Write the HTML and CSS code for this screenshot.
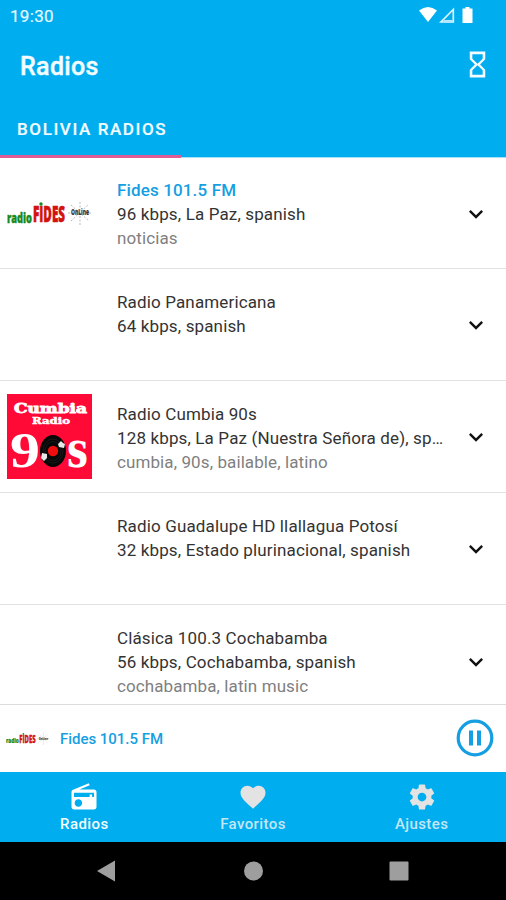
FILE: index.html
```html
<!DOCTYPE html>
<html lang="es">
<head>
<meta charset="utf-8">
<title>Radios</title>
<link rel="stylesheet" href="styles.css">
</head>
<body>
<svg class="defs" width="0" height="0">
  <symbol id="chevron" viewBox="0 0 24 24"><path d="M16.59 8.59 12 13.17 7.41 8.59 6 10l6 6 6-6z"/></symbol>
</svg>
<div class="app">
  <header class="header">
    <div class="status">
      <span class="clock">19:30</span>
      <svg class="status-icons" width="56" height="18" viewBox="0 0 56 18" fill="#fff">
        <path d="M0 4.500Q9-2.500 18 4.500L9 16z"/>
        <path d="M34.300 3.500V16H22z" fill="none" stroke="#d8f3ff" stroke-width="1.700"/><path d="M25 14h9v2.500h-9z" fill="#b5e7ff"/>
        <path d="M43.500 2.500h3V1h4v1.500h3V17h-10z"/>
      </svg>
    </div>
    <div class="titlebar">
      <h1>Radios</h1>
      <svg class="timer" viewBox="0 0 24 24"><path d="M6 2v6h.01L6 8.010 10 12l-4 4 .01.01H6V22h12v-5.990h-.01L18 16l-4-4 4-3.990-.01-.01H18V2H6zm10 14.500V20H8v-3.500l4-4 4 4zm-4-5-4-4V4h8v3.500l-4 4z"/></svg>
    </div>
    <div class="tab">BOLIVIA RADIOS</div>
  </header>
  <main class="list">
    <article class="row">
      <div class="art">
        <svg class="fides" viewBox="0 0 84 26">
          <text class="fides-radio" x="0" y="21.500" textLength="25" lengthAdjust="spacingAndGlyphs">radio</text>
          <text class="fides-name" x="26" y="21" textLength="32" lengthAdjust="spacingAndGlyphs">FIDES</text>
          <circle cx="34" cy="3" r="1.700" fill="#148a1c"/>
          <path class="fides-rays" d="M73 1v23M64 4l18 16M64 20 81 4M61 12h23"/>
          <text class="fides-online" x="64" y="14" textLength="18" lengthAdjust="spacingAndGlyphs">OnLine</text>
        </svg>
      </div>
      <div class="info"><h2 class="playing">Fides 101.5 FM</h2><p class="meta">96 kbps, La Paz, spanish</p><p class="tags">noticias</p></div>
      <svg class="chevron"><use href="#chevron"/></svg>
    </article>
    <article class="row">
      <div class="art"></div>
      <div class="info"><h2>Radio Panamericana</h2><p class="meta">64 kbps, spanish</p></div>
      <svg class="chevron"><use href="#chevron"/></svg>
    </article>
    <article class="row">
      <div class="art">
        <svg class="cumbia" viewBox="0 0 85 85">
          <path fill="#ff0a36" d="M0 0h85v85H0z"/>
          <g font-family="DejaVu Serif, serif" font-weight="700" fill="#fff" stroke="#fff">
            <text x="7" y="19" font-size="12" stroke-width=".8" textLength="73" lengthAdjust="spacingAndGlyphs">Cumbia</text>
            <text x="25" y="29.500" font-size="9" stroke-width=".5" textLength="38" lengthAdjust="spacingAndGlyphs">Radio</text>
          </g>
          <text x="60" y="73" font-family="DejaVu Serif, serif" font-weight="700" font-size="50" fill="#fff" textLength="21" lengthAdjust="spacingAndGlyphs">s</text>
          <text x="3" y="73" font-family="Liberation Serif, serif" font-weight="700" font-size="50" fill="#fff" textLength="30" lengthAdjust="spacingAndGlyphs">9</text>
          <ellipse cx="46" cy="57" rx="13" ry="16" fill="#080808"/>
          <g fill="none" stroke="#333" stroke-width=".4"><ellipse cx="46" cy="57" rx="10" ry="12"/><ellipse cx="46" cy="57" rx="8" ry="9.500"/></g>
          <circle cx="46" cy="57" r="5.200" fill="#f00d0d"/>
          <path fill="#e8e8e8" d="m54 47 2 2 2 1-1 4-5-1-1-3zM35 59l5 1v4l-3 3-3-3z"/>
        </svg>
      </div>
      <div class="info"><h2>Radio Cumbia 90s</h2><p class="meta">128 kbps, La Paz (Nuestra Señora de), spanish</p><p class="tags">cumbia, 90s, bailable, latino</p></div>
      <svg class="chevron"><use href="#chevron"/></svg>
    </article>
    <article class="row">
      <div class="art"></div>
      <div class="info"><h2>Radio Guadalupe HD llallagua Potosí</h2><p class="meta">32 kbps, Estado plurinacional, spanish</p></div>
      <svg class="chevron"><use href="#chevron"/></svg>
    </article>
    <article class="row">
      <div class="art"></div>
      <div class="info"><h2>Clásica 100.3 Cochabamba</h2><p class="meta">56 kbps, Cochabamba, spanish</p><p class="tags">cochabamba, latin music</p></div>
      <svg class="chevron"><use href="#chevron"/></svg>
    </article>
  </main>
  <section class="player">
    <svg class="fides-small" viewBox="0 0 84 26">
      <text class="fides-radio" x="0" y="21.500" textLength="25" lengthAdjust="spacingAndGlyphs">radio</text>
      <text class="fides-name" x="26" y="21" textLength="32" lengthAdjust="spacingAndGlyphs">FIDES</text>
      <circle cx="34" cy="3" r="1.700" fill="#148a1c"/>
      <path class="fides-rays" d="M73 1v23M64 4l18 16M64 20 81 4M61 12h23"/>
      <text class="fides-online" x="64" y="14" textLength="18" lengthAdjust="spacingAndGlyphs">OnLine</text>
    </svg>
    <span class="now">Fides 101.5 FM</span>
    <svg class="pause" viewBox="0 0 38 38"><circle cx="19" cy="19" r="16.800" fill="none" stroke="#159fe2" stroke-width="3.200"/><path fill="#159fe2" d="M13 11.500h4v15h-4zM21 11.500h4v15h-4z"/></svg>
  </section>
  <nav class="nav">
    <div class="item active"><svg viewBox="0 0 24 24"><path d="M3.240 6.150C2.510 6.430 2 7.170 2 8v12c0 1.100.89 2 2 2h16c1.110 0 2-.9 2-2V8c0-1.110-.89-2-2-2H8.300l8.260-3.340L15.880 1 3.240 6.150zM7.500 19.700c-1.660 0-3-1.340-3-3s1.340-3 3-3 3 1.340 3 3-1.340 3-3 3zm12.500-7.700h-1.500v-2h-2v2H4V8.500h16v3.500z"/></svg><span>Radios</span></div>
    <div class="item"><svg viewBox="0 0 24 24"><path d="m12 21.350-1.450-1.320C5.400 15.360 2 12.280 2 8.500 2 5.420 4.420 3 7.500 3c1.740 0 3.410.81 4.500 2.090C13.090 3.810 14.760 3 16.500 3 19.580 3 22 5.420 22 8.500c0 3.780-3.400 6.860-8.550 11.540L12 21.350z"/></svg><span>Favoritos</span></div>
    <div class="item"><svg viewBox="0 0 24 24"><path d="M19.430 12.980c.04-.32.070-.64.070-.98s-.03-.66-.07-.98l2.110-1.650c.19-.15.24-.42.12-.64l-2-3.460c-.12-.22-.39-.3-.61-.22l-2.490 1c-.52-.4-1.080-.73-1.690-.98l-.38-2.650C14.460 2.180 14.250 2 14 2h-4c-.25 0-.46.18-.49.42l-.38 2.650c-.61.25-1.170.59-1.690.98l-2.490-1c-.23-.09-.49 0-.61.22l-2 3.460c-.13.22-.07.49.12.64l2.110 1.650c-.04.32-.07.65-.07.98s.03.66.07.98l-2.110 1.650c-.19.15-.24.42-.12.64l2 3.460c.12.22.39.3.61.22l2.490-1c.52.4 1.080.73 1.690.98l.38 2.650c.03.24.24.42.49.42h4c.25 0 .46-.18.49-.42l.38-2.650c.61-.25 1.170-.59 1.690-.98l2.490 1c.23.09.49 0 .61-.22l2-3.460c.12-.22.07-.49-.12-.64l-2.110-1.650zM12 15.500c-1.930 0-3.500-1.570-3.500-3.500s1.570-3.500 3.500-3.500 3.500 1.570 3.500 3.500-1.570 3.500-3.500 3.500z"/></svg><span>Ajustes</span></div>
  </nav>
  <footer class="system">
    <svg viewBox="0 0 20 22"><path d="M0 11 18 .5v21z"/></svg>
    <svg viewBox="0 0 20 22"><circle cx="10.500" cy="11" r="9.500"/></svg>
    <svg viewBox="0 0 20 22"><rect x=".5" y="1.500" width="19" height="19" rx="1"/></svg>
  </footer>
</div>
</body>
</html>
```
FILE: styles.css
```css
* { box-sizing: border-box; }
body { margin: 0; font-family: Roboto, "Liberation Sans", sans-serif; background: #fff; }
h1, h2, p { margin: 0; font-weight: 400; }
svg { display: block; flex: none; }
.defs { position: absolute; }
.app { width: 506px; height: 900px; display: flex; flex-direction: column; overflow: hidden; }
.header { height: 158px; flex: none; background: #00adef; color: #f3fcff; border-bottom: 1px solid #a9dff6; display: flex; flex-direction: column; }
.status { height: 32px; padding: 0 31px 0 10px; display: flex; align-items: center; justify-content: space-between; }
.clock { font-size: 17px; letter-spacing: .3px; color: #e4f8ff; -webkit-text-stroke: .2px; }
.status-icons { margin-top: -2px; }
.titlebar { height: 68px; padding: 0 13px 0 20px; display: flex; align-items: center; justify-content: space-between; }
.titlebar h1 { font-size: 25px; font-weight: 500; letter-spacing: .35px; -webkit-text-stroke: .4px; }
.timer { width: 31px; height: 31px; fill: #f3fcff; margin-top: -4px; }
.tab { width: 181px; height: 58px; margin-bottom: -1px; padding: 3px 0 0 17px; display: flex; align-items: center; font-size: 17px; font-weight: 500; letter-spacing: 1.6px; white-space: nowrap; border-bottom: 3px solid #df5d94; -webkit-text-stroke: .2px; }
.list { height: 546px; flex: none; overflow: hidden; }
.row { height: 112.100px; border-bottom: 1.500px solid #e2e2e2; display: flex; align-items: center; }
.row:first-child { height: 111.200px; }
.art { width: 117px; flex: none; padding-left: 7px; }
.fides { width: 84px; height: 26px; margin-top: 2px; }
.fides-radio, .fides-name, .fides-online { font-family: "Open Sans", sans-serif; font-weight: 800; }
.fides-radio { font-size: 14px; fill: #148a1c; stroke: #148a1c; stroke-width: .4; }
.fides-name { font-size: 22px; fill: #d3120f; stroke: #d3120f; stroke-width: .6; }
.fides-online { font-size: 8px; fill: #333; }
.fides-rays { stroke: #aaa; stroke-width: .8; stroke-dasharray: 2 1.500; }
.cumbia { width: 85px; height: 85px; }
.info { width: 328px; height: 72px; margin-top: 2px; color: #333; font-size: 17px; line-height: 24px; }
.info h2, .info p { font-size: 17px; letter-spacing: .14px; white-space: nowrap; overflow: hidden; text-overflow: ellipsis; }
.info .playing { color: #159fe2; font-weight: 500; }
.info .tags { color: #808080; letter-spacing: .1px; }
.chevron { width: 28px; height: 28px; margin-left: 17px; margin-top: 1px; fill: #111; }
.player { height: 68px; flex: none; border-top: 1px solid #dcdcdc; display: flex; align-items: center; padding: 0 12px 0 6px; }
.fides-small { width: 43px; height: 14px; }
.now { margin-left: 11px; font-size: 15px; font-weight: 500; letter-spacing: -.03px; color: #159fe2; }
.pause { width: 38px; height: 38px; margin-left: auto; margin-top: -1px; }
.nav { height: 70px; flex: none; background: #00adef; display: grid; grid-template-columns: repeat(3, 1fr); color: #c4e6f5; }
.item { display: flex; flex-direction: column; align-items: center; padding-top: 10px; font-size: 15px; line-height: 18px; font-weight: 500; letter-spacing: .4px; }
.item svg { width: 30px; height: 30px; margin-bottom: 3px; fill: #e3e3e3; }
.active { color: #f3fcff; }
.item.active svg { fill: #fff; }
.system { height: 58px; background: #000; display: flex; justify-content: center; align-items: center; gap: 126px; }
.system svg { width: 20px; height: 22px; fill: #9e9e9e; }
```
